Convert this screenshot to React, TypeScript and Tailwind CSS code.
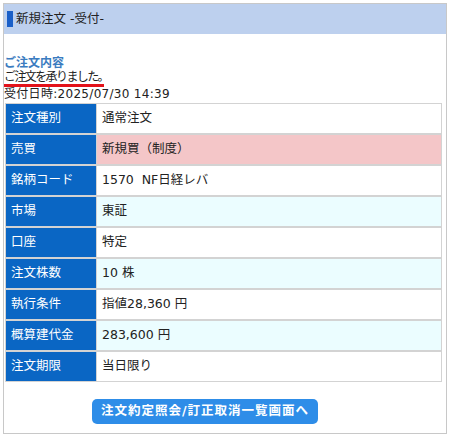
import React from "react";

const rows: { label: string; value: string; bg: string }[] = [
  { label: "注文種別", value: "通常注文", bg: "bg-white" },
  { label: "売買", value: "新規買（制度）", bg: "bg-[#f4c6c8]" },
  { label: "銘柄コード", value: "1570  NF日経レバ", bg: "bg-white" },
  { label: "市場", value: "東証", bg: "bg-[#ebfdff]" },
  { label: "口座", value: "特定", bg: "bg-white" },
  { label: "注文株数", value: "10 株", bg: "bg-[#ebfdff]" },
  { label: "執行条件", value: "指値28,360 円", bg: "bg-white" },
  { label: "概算建代金", value: "283,600 円", bg: "bg-[#ebfdff]" },
  { label: "注文期限", value: "当日限り", bg: "bg-white" },
];

export default function App() {
  return (
    <div
      className="w-[450px] h-[438px] bg-white pt-[3px] pl-[3px] text-[12px] text-[#222]"
      style={{ fontFamily: '"DejaVu Sans", "Noto Sans CJK JP", sans-serif' }}
    >
      <div className="w-[444px] h-[431px] border border-[#c8c8c8] flex flex-col">
        <div className="h-[30px] bg-[#bdd0ee] flex items-center pl-[3px] shrink-0">
          <div className="w-[6px] h-[16px] bg-[#1a5fc8]" />
          <span className="ml-[3px] text-[12.5px] text-[#222]">新規注文 -受付-</span>
        </div>
        <div className="mt-[22px] leading-[15px]">
          <div className="font-bold text-[#3b7cc0]">ご注文内容</div>
          <div className="leading-[13px] tracking-[-1.6px]">ご注文を承りました。</div>
          <div className="h-[3px] w-[100px] bg-[#e3121a]" />
          <div className="leading-[14px] tracking-[0.3px]">受付日時:2025/07/30 14:39</div>
        </div>
        <div className="ml-[1px] mt-[2px] w-[437px] bg-[#d3d3d3] p-[1px] flex flex-col gap-[2px]">
          {rows.map((r) => (
            <div key={r.label} className="flex h-[29px] gap-[1px]">
              <div className="w-[90px] bg-[#0a66c4] text-white flex items-center pl-[5px] text-[12.5px]">
                {r.label}
              </div>
              <div className={`flex-1 ${r.bg} flex items-center pl-[5px] text-[12.5px] whitespace-pre`}>{r.value}</div>
            </div>
          ))}
        </div>
        <div className="mt-[17px] ml-[88px]">
          <button className="h-[25px] w-[226px] rounded-[5px] bg-[#2e8de8] text-white font-bold text-[12.5px] tracking-[1px] flex items-center justify-center">
            注文約定照会/訂正取消一覧画面へ
          </button>
        </div>
      </div>
    </div>
  );
}
